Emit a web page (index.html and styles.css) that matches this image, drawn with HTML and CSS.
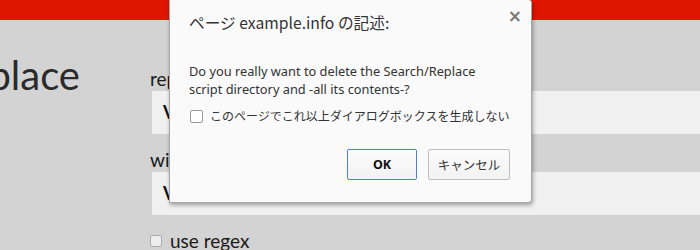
FILE: index.html
```html
<!DOCTYPE html>
<html lang="ja">
<head>
<meta charset="utf-8">
<title>Search/Replace</title>
<link rel="stylesheet" href="styles.css">
</head>
<body>
<header class="topbar"></header>
<main class="page">
  <div class="title-col"><h1 class="page-title">Search/Replace</h1></div>
  <form class="form">
    <label class="field-label">replace</label>
    <div class="input">Value</div>
    <label class="field-label second">with</label>
    <div class="input">Value</div>
    <label class="check-row"><span class="box"></span>use regex</label>
  </form>
</main>
<div class="dialog" role="dialog">
  <div class="close">×</div>
  <div class="dlg-title">ページ example.info の記述:</div>
  <p class="dlg-msg">Do you really want to delete the Search/Replace<br>script directory and -all its contents-?</p>
  <label class="dlg-check"><span class="dlg-box"></span>このページでこれ以上ダイアログボックスを生成しない</label>
  <div class="dlg-buttons">
    <button class="btn ok" type="button">OK</button>
    <button class="btn cancel" type="button">キャンセル</button>
  </div>
</div>
</body>
</html>
```
FILE: styles.css
```css
html, body {
  margin: 0;
  padding: 0;
  height: 100%;
  overflow: hidden;
  background: #d3d3d3;
}
body {
  font-family: Lato, "Noto Sans", sans-serif;
  color: #222;
}
.topbar {
  height: 20px;
  background: #e01500;
}
.page {
  display: flex;
  align-items: flex-start;
}
.title-col {
  width: 80px;
  overflow: hidden;
  display: flex;
  justify-content: flex-end;
  margin-top: 30px;
}
.page-title {
  margin: 0;
  font-weight: 400;
  font-size: 40px;
  line-height: 50px;
  white-space: nowrap;
  color: #2a2a2a;
  font-family: Lato, "Open Sans", sans-serif;
}
.form {
  margin-left: 70px;
  flex: 1;
  display: flex;
  flex-direction: column;
  padding-top: 47px;
}
.field-label {
  font-size: 19px;
  line-height: 24px;
  color: #1a1a1a;
}
.field-label.second {
  margin-top: 14px;
}
.input {
  margin-left: 2px;
  height: 43px;
  background: #f0f0f0;
  font-size: 18px;
  font-weight: 700;
  line-height: 43px;
  padding-left: 11px;
  color: #111;
  white-space: nowrap;
  overflow: hidden;
}
.check-row {
  display: flex;
  align-items: center;
  gap: 8px;
  margin-top: 14px;
  font-size: 19px;
  line-height: 24px;
  color: #1a1a1a;
}
.box {
  width: 10px;
  height: 10px;
  border: 1px solid #aaa;
  border-radius: 2px;
  background: #eee;
}

.dialog {
  position: absolute;
  left: 169px;
  top: 0;
  box-sizing: border-box;
  width: 363px;
  height: 203px;
  padding: 0 21px 22px 19px;
  background: #fafafa;
  border: 1px solid #a6a6a6;
  border-top: none;
  border-radius: 0 3px 3px 0;
  box-shadow: 1px 2px 4px rgba(0, 0, 0, 0.35);
  font-family: "Noto Sans CJK JP", "Noto Sans", sans-serif;
  color: #333;
  display: flex;
  flex-direction: column;
}
.close {
  position: absolute;
  right: 9px;
  top: 6px;
  font-size: 17px;
  font-weight: 700;
  color: #7a7a7a;
  font-family: "DejaVu Sans", sans-serif;
  line-height: 20px;
}
.dlg-title {
  margin-top: 13px;
  font-size: 15.7px;
  line-height: 20px;
  color: #333;
}
.dlg-msg {
  margin: 29px 0 0 0;
  font-family: "Noto Sans", sans-serif;
  font-size: 12.8px;
  line-height: 18px;
  color: #333;
}
.dlg-check {
  margin-top: 9px;
  margin-left: 1px;
  display: flex;
  align-items: center;
  gap: 7px;
  font-size: 12px;
  line-height: 18px;
  color: #333;
}
.dlg-box {
  width: 11px;
  height: 11px;
  border: 1px solid #9a9a9a;
  border-radius: 2px;
  background: #fff;
  flex: none;
}
.dlg-buttons {
  margin-top: auto;
  display: flex;
  justify-content: flex-end;
  gap: 11px;
}
.btn {
  height: 31px;
  margin: 0;
  border-radius: 2px;
  background: linear-gradient(#fcfcfc, #f2f2f2);
  font-family: "Noto Sans CJK JP", "Noto Sans", sans-serif;
  font-size: 12.5px;
  color: #333;
  padding: 0;
}
.ok {
  width: 70px;
  border: 1px solid #4a80e4;
  font-weight: 700;
  color: #111;
  font-family: "Noto Sans", sans-serif;
}
.cancel {
  width: 82px;
  border: 1px solid #bdbdbd;
}
```
